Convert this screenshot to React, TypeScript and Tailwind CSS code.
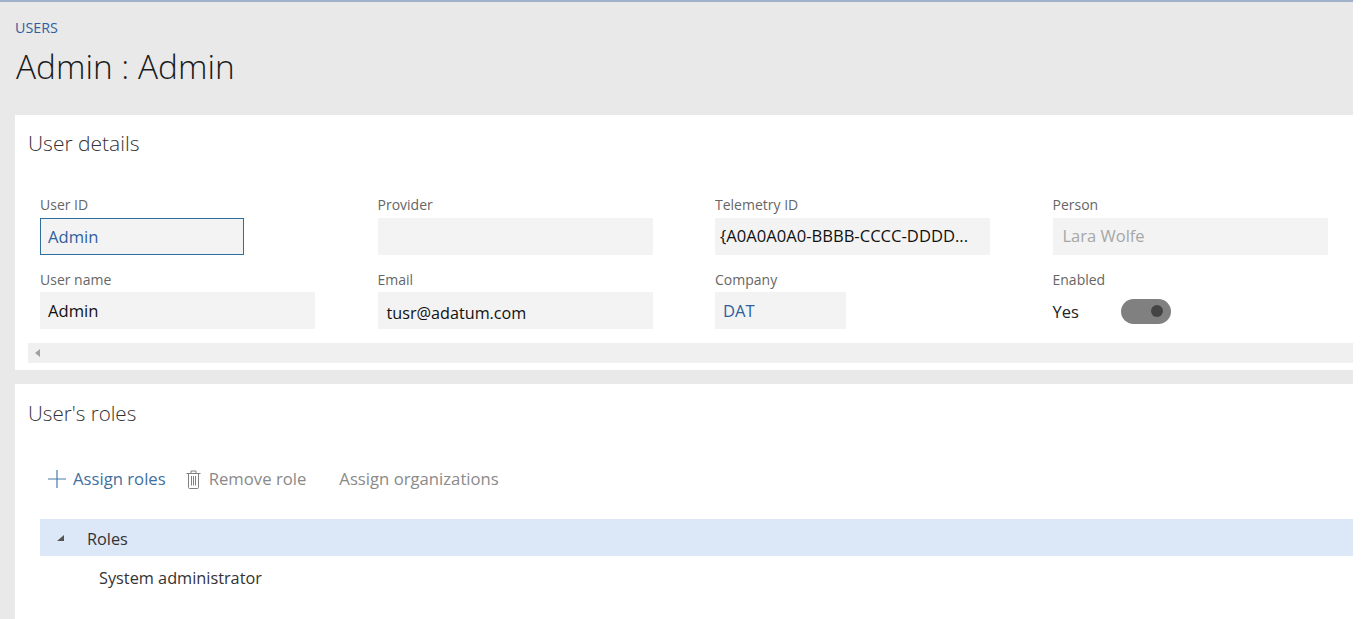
import React from 'react';

const font = "font-['Open_Sans',sans-serif]";

const Label = ({ children, low }: { children: React.ReactNode; low?: boolean }) => (
  <div className={`h-[24px] text-[14px] text-[#666666] ${low ? 'leading-[24px]' : 'leading-[22px]'}`}>{children}</div>
);

const Field = ({
  label,
  value,
  width,
  className,
  low,
}: {
  label: string;
  value?: string;
  width: string;
  className: string;
  low?: boolean;
}) => (
  <div>
    <Label low={low}>{label}</Label>
    <div className={`h-[37px] bg-[#f3f3f3] flex items-center ${width} ${className}`}>{value}</div>
  </div>
);

const PlusIcon = () => (
  <svg width="18" height="18" viewBox="0 0 18 18" fill="none" stroke="#4a7aa8" strokeWidth="1.2">
    <path d="M0 9h18M9 0v18" />
  </svg>
);

const TrashIcon = () => (
  <svg width="15" height="19" viewBox="0 0 15 19" fill="none" stroke="#808080" strokeWidth="1">
    <path d="M0.500 3.500h14M5 3.500v-2.500h5v2.500M2.500 3.500v14a1 1 0 0 0 1 1h8a1 1 0 0 0 1-1v-14M5.500 6v9.500M7.500 6v9.500M9.500 6v9.500" />
  </svg>
);

export default function App() {
  return (
    <div className={`${font} w-[1362px] h-[619px] bg-white overflow-hidden`}>
      <div className="w-[1353px] h-[619px] bg-[#e9e9e9] border-t-2 border-[#9fb2c9] flex flex-col overflow-hidden">
        <div className="h-[113px] pl-[15px] shrink-0">
          <div className="pt-[16px] text-[14.300px] leading-[20px] text-[#2f5f9e]">USERS</div>
          <h1 className="mt-[6px] pl-[1px] text-[33.400px] leading-[44px] font-light text-[#1a1a1a]">Admin : Admin</h1>
        </div>

        <section className="ml-[15px] h-[255px] shrink-0 bg-white pl-[13px] pt-[13px]">
          <h2 className="text-[21px] leading-[30px] font-light text-[#333333]">User details</h2>
          <div className="mt-[36px] ml-[12px] grid grid-cols-[repeat(4,337.5px)]">
            <div className="h-[74px]">
              <Label>User ID</Label>
              <div className="h-[37px] w-[204px] bg-[#f3f3f3] border border-[#2f6f9e] flex items-center pl-[7px] pt-[2px] text-[16.600px] text-[#2f5f9e]">
                Admin
              </div>
            </div>
            <Field label="Provider" width="w-[275px]" className="" />
            <Field
              label="Telemetry ID"
              value="{A0A0A0A0-BBBB-CCCC-DDDD..."
              width="w-[275px]"
              className="pl-[5px] text-[16.600px] text-[#111111]"
            />
            <Field label="Person" value="Lara Wolfe" width="w-[275px]" className="pl-[10px] text-[16.500px] text-[#a6a6a6]" />
            <Field low label="User name" value="Admin" width="w-[275px]" className="pl-[8px] pt-[2px] text-[16.600px] text-[#111111]" />
            <Field low label="Email" value="tusr@adatum.com" width="w-[275px]" className="pl-[9px] pt-[6px] text-[16.200px] text-[#111111]" />
            <Field low label="Company" value="DAT" width="w-[131px]" className="pl-[8px] pt-[2px] text-[16.600px] text-[#2f5f9e]" />
            <div>
              <Label low>Enabled</Label>
              <div className="h-[37px] flex items-center text-[16.500px] text-[#222222]">
                <span className="w-[68px] pt-[4px]">Yes</span>
                <span className="mt-[1px] w-[50px] h-[25px] rounded-full bg-[#808080] flex items-center justify-end pr-[8px]">
                  <span className="w-[12px] h-[12px] rounded-full bg-[#444444]" />
                </span>
              </div>
            </div>
          </div>
          <div className="mt-[14px] h-[20px] bg-[#f0f0f0] flex items-center pl-[7px]">
            <span className="w-0 h-0 border-y-[4px] border-y-transparent border-r-[5px] border-r-[#a0a0a0]" />
          </div>
        </section>

        <section className="mt-[14px] ml-[15px] flex-1 bg-white pl-[13px] pt-[14px]">
          <h2 className="text-[20.600px] leading-[30px] font-light text-[#333333]">User's roles</h2>
          <div className="mt-[36px] ml-[20px] h-[30px] flex items-center text-[16.700px]">
            <PlusIcon />
            <span className="ml-[7px] text-[#3f6f9f]">Assign roles</span>
            <span className="ml-[20px]">
              <TrashIcon />
            </span>
            <span className="ml-[8px] text-[#8a8a8a]">Remove role</span>
            <span className="ml-[33px] text-[#8a8a8a]">Assign organizations</span>
          </div>
          <div className="mt-[25px] ml-[12px] h-[37px] bg-[#dce8f7] flex items-center text-[16.300px] text-[#333333]">
            <svg className="ml-[15px]" width="10" height="10" viewBox="0 0 10 10">
              <path d="M9 2v6H2z" fill="#555555" />
            </svg>
            <span className="ml-[22px] pt-[3px]">Roles</span>
          </div>
          <div className="ml-[71px] mt-[10px] text-[16.300px] leading-[24px] text-[#333333]">System administrator</div>
        </section>
      </div>
    </div>
  );
}
